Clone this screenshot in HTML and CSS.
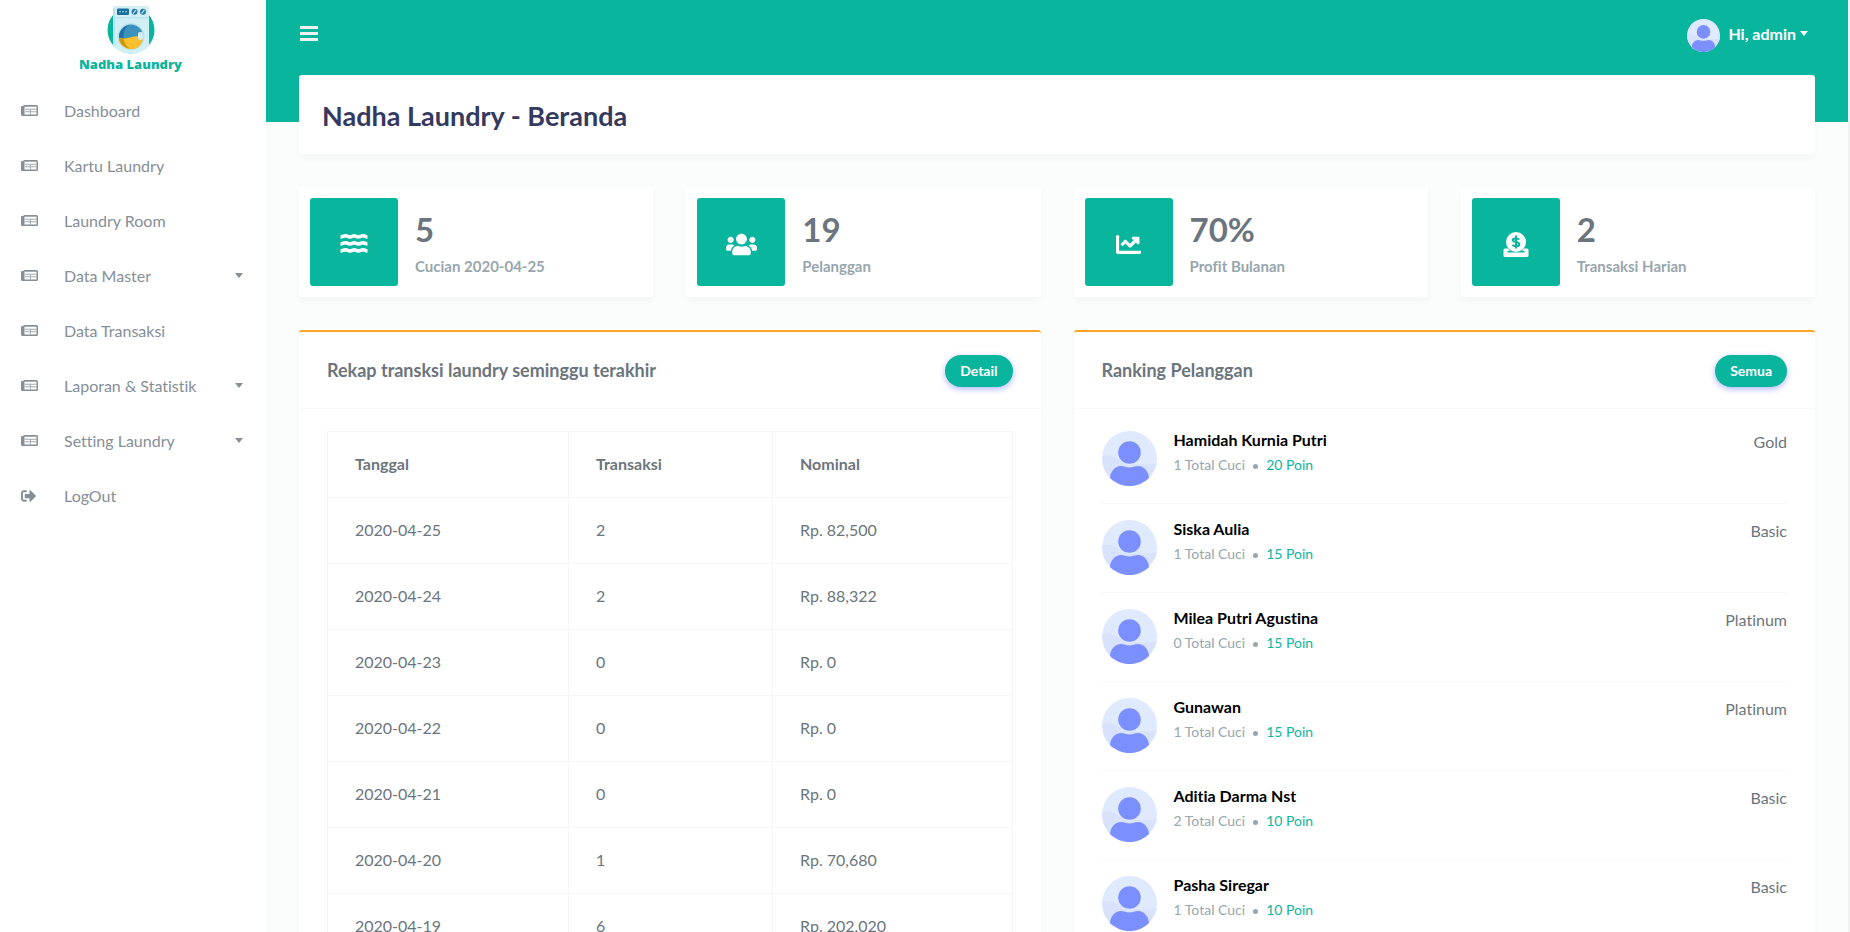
FILE: index.html
```
<!DOCTYPE html>
<html lang="id">
<head>
<meta charset="utf-8">
<title>Nadha Laundry - Beranda</title>
<link rel="stylesheet" href="styles.css">
</head>
<body>
<svg class="sprite" aria-hidden="true">
  <symbol id="news" viewBox="0 0 17 12">
    <path fill="currentColor" fill-rule="evenodd" d="M2 1.500A1.500 1.500 0 0 1 3.500 0h12A1.500 1.500 0 0 1 17 1.500v8a1.500 1.500 0 0 1-1.500 1.500h-14A1.500 1.500 0 0 1 0 9.500V2a1 1 0 0 1 1-1h1zM3.500 1.500v8h12v-8z"/>
    <path fill="currentColor" opacity=".75" d="M3.500 1.500h12v.6h-12zM4 3.800h11.500v1H4zM4 6.200h11.500v1.100H4zM8.900 4.500h1v5h-1zM1 2.500h1V9H1z"/>
  </symbol>
  <symbol id="person" viewBox="0 0 55 55">
    <circle cx="27.500" cy="27.500" r="27.500" fill="#e0eaff"/>
    <path fill="#d8e3fb" d="M0 26c6-3 11-1 17 3s24 6 38 3l-2 6-9 12H10L2 38z"/>
    <circle cx="27.500" cy="21.500" r="12.500" fill="#e0eaff"/>
    <circle cx="27.500" cy="21.500" r="11.300" fill="#7c8fff"/>
    <path fill="#7c8fff" d="M8 47c.5-7 5-12 11-12 3 0 5 1.500 8.500 1.500S33 35 36 35c6 0 10.500 5 11 12a27.500 27.500 0 0 1-39 0z"/>
  </symbol>
</svg>

<div class="app">
  <aside class="sidebar">
    <a class="brand" href="#">
      <svg class="brand-mark" viewBox="0 0 48 48" aria-hidden="true">
        <circle cx="24" cy="24" r="23.500" fill="#0ab59e"/>
        <path fill="#d3eff6" d="M6 2a2 2 0 0 1 2-2h32a2 2 0 0 1 2 2v38c-5 5-11 7.500-18 7.500S11 45 6 40z"/>
        <path fill="#b9e3ee" d="M6 11h36v1.500H6zM6 2h2v39l-2-2z"/>
        <rect x="10" y="2.500" width="12" height="6.500" rx="1" fill="#1f6f9c"/>
        <path stroke="#6fc3dc" stroke-width="1.200" stroke-dasharray="2 1" d="M12 5.700h8"/>
        <circle cx="27.500" cy="5.700" r="3" fill="#2b78a5"/><circle cx="36" cy="5.700" r="3" fill="#2b78a5"/>
        <path stroke="#a8dced" stroke-width="1.200" d="m26 7.500 3-3.500m5.500 3.500 3-3.500"/>
        <circle cx="24" cy="30.500" r="13.500" fill="#b9e3ee"/>
        <circle cx="24" cy="30.500" r="12" fill="#3c92bd"/>
        <path fill="#f8c02c" d="M12 32c8 2 12-3 24-1.500a12 12 0 0 1-24 1.500z"/>
        <path fill="#2170a0" d="M12 31.500c0-6 4-11 10-12.500-4 3-6 7-5.500 13z"/>
        <path fill="#cf9708" d="M12 32l4.500.4c.5 4 3 8 6.500 10-6-.4-10.500-4.400-11-10.400z"/>
        <rect x="31" y="26" width="5" height="8" rx="2" fill="#d3eff6"/>
      </svg>
      <span class="brand-name">Nadha Laundry</span>
    </a>
    <nav class="menu">
      <a href="#"><svg class="mi"><use href="#news"/></svg><span>Dashboard</span></a>
      <a href="#"><svg class="mi"><use href="#news"/></svg><span>Kartu Laundry</span></a>
      <a href="#"><svg class="mi"><use href="#news"/></svg><span>Laundry Room</span></a>
      <a class="sub" href="#"><svg class="mi"><use href="#news"/></svg><span>Data Master</span></a>
      <a href="#"><svg class="mi"><use href="#news"/></svg><span>Data Transaksi</span></a>
      <a class="sub" href="#"><svg class="mi"><use href="#news"/></svg><span>Laporan &amp; Statistik</span></a>
      <a class="sub" href="#"><svg class="mi"><use href="#news"/></svg><span>Setting Laundry</span></a>
      <a href="#"><svg class="mi" viewBox="32 64 576 384"><path fill="currentColor" d="M497 273L329 441c-15 15-41 4.500-41-17v-96H152c-13.300 0-24-10.700-24-24v-96c0-13.300 10.700-24 24-24h136V88c0-21.400 25.900-32 41-17l168 168c9.300 9.400 9.300 24.600 0 34zM192 436v-40c0-6.600-5.400-12-12-12H96c-17.700 0-32-14.300-32-32V160c0-17.700 14.300-32 32-32h84c6.600 0 12-5.400 12-12V76c0-6.600-5.400-12-12-12H96c-53 0-96 43-96 96v192c0 53 43 96 96 96h84c6.600 0 12-5.400 12-12z" transform="translate(32)"/></svg><span>LogOut</span></a>
    </nav>
  </aside>

  <div class="page">
    <header class="topbar">
      <button class="burger" type="button" aria-label="Menu"><svg viewBox="0 0 18 15" width="18" height="15"><path fill="#f2f2f2" d="M0 0h18v3H0zM0 6h18v3H0zM0 12h18v3H0z"/></svg></button>
      <button class="user" type="button"><svg width="33" height="33"><use href="#person"/></svg><span>Hi, admin</span></button>
    </header>
    <main class="content">
      <section class="card title"><h1>Nadha Laundry - Beranda</h1></section>

      <section class="stats">
        <article class="card stat">
          <div class="tile"><svg width="28" height="22" viewBox="0 0 28 22" fill="none" stroke="#fff" stroke-width="3.600"><path d="M.5 4c2 0 3-1.200 5-1.200s2.500 1.200 4.500 1.200 2.500-1.200 4.200-1.200 2.300 1.200 4.300 1.200 2.500-1.200 4.500-1.200 2.500 1.200 4.500 1.200M.5 11c2 0 3-1.200 5-1.200s2.500 1.200 4.500 1.200 2.500-1.200 4.200-1.200 2.300 1.200 4.300 1.200 2.500-1.200 4.500-1.200 2.500 1.200 4.500 1.200M.5 18c2 0 3-1.200 5-1.200s2.500 1.200 4.500 1.200 2.500-1.200 4.200-1.200 2.300 1.200 4.300 1.200 2.500-1.200 4.500-1.200 2.500 1.200 4.500 1.200"/></svg></div>
          <div class="figures"><strong>5</strong><h4>Cucian 2020-04-25</h4></div>
        </article>
        <article class="card stat">
          <div class="tile"><svg width="31" height="25" viewBox="0 0 640 512"><path fill="#fff" d="M96 224c35.300 0 64-28.700 64-64s-28.700-64-64-64-64 28.700-64 64 28.700 64 64 64zm448 0c35.300 0 64-28.700 64-64s-28.700-64-64-64-64 28.700-64 64 28.700 64 64 64zm32 32h-64c-17.600 0-33.500 7.100-45.100 18.600 40.300 22.100 68.900 62 75.100 109.400h66c17.700 0 32-14.300 32-32v-32c0-35.300-28.700-64-64-64zm-256 0c61.900 0 112-50.100 112-112S381.900 32 320 32 208 82.100 208 144s50.100 112 112 112zm76.800 32h-8.300c-20.800 10-43.900 16-68.500 16s-47.600-6-68.500-16h-8.300C179.600 288 128 339.600 128 403.200V432c0 26.500 21.500 48 48 48h288c26.500 0 48-21.500 48-48v-28.800c0-63.600-51.600-115.200-115.200-115.200zm-223.700-13.400C161.500 263.100 145.600 256 128 256H64c-35.300 0-64 28.700-64 64v32c0 17.700 14.300 32 32 32h65.900c6.300-47.400 34.900-87.300 75.200-109.400z"/></svg></div>
          <div class="figures"><strong>19</strong><h4>Pelanggan</h4></div>
        </article>
        <article class="card stat">
          <div class="tile"><svg width="25" height="25" viewBox="0 0 512 512"><path fill="#fff" d="M496 384H64V80c0-8.800-7.200-16-16-16H16C7.200 64 0 71.200 0 80v336c0 17.700 14.300 32 32 32h464c8.800 0 16-7.200 16-16v-32c0-8.800-7.200-16-16-16zM464 96H345.900c-21.400 0-32.100 25.900-17 41l32.400 32.400L288 242.800l-73.400-73.400c-12.500-12.500-32.800-12.500-45.300 0l-68.700 68.700c-6.200 6.200-6.200 16.400 0 22.600l22.600 22.600c6.200 6.200 16.400 6.200 22.600 0L192 237.300l73.400 73.400c12.500 12.500 32.800 12.500 45.300 0l96-96 32.400 32.400c15.100 15.100 41 4.400 41-17V112c-.100-8.800-7.300-16-16.100-16z"/></svg></div>
          <div class="figures"><strong>70%</strong><h4>Profit Bulanan</h4></div>
        </article>
        <article class="card stat">
          <div class="tile"><svg width="26" height="25" viewBox="0 0 26 25"><path fill="#fff" d="M.5 18a1.500 1.500 0 0 1 1.500-1.500h3l2 2.500h-2.500v1.500h17V19H19l2-2.500h3a1.500 1.500 0 0 1 1.500 1.500v5.500A1.500 1.500 0 0 1 24 25H2a1.500 1.500 0 0 1-1.500-1.500z"/><circle cx="13" cy="10" r="10" fill="#fff"/><path fill="none" stroke="#0ab59e" stroke-width="2" d="M16.300 7.500c-.8-1.200-6.600-1.900-6.600.5 0 2.600 6.600 1.500 6.600 4.300 0 2.600-5.700 2.200-6.800.6M13 3.500v13"/></svg></div>
          <div class="figures"><strong>2</strong><h4>Transaksi Harian</h4></div>
        </article>
      </section>

      <section class="panels">
        <article class="card panel">
          <header class="panel-head"><h2>Rekap transksi laundry seminggu terakhir</h2><a class="pill" href="#">Detail</a></header>
          <div class="panel-body">
            <table class="recap">
              <thead><tr><th class="c1">Tanggal</th><th class="c2">Transaksi</th><th>Nominal</th></tr></thead>
              <tbody>
                <tr><td>2020-04-25</td><td>2</td><td>Rp. 82,500</td></tr>
                <tr><td>2020-04-24</td><td>2</td><td>Rp. 88,322</td></tr>
                <tr><td>2020-04-23</td><td>0</td><td>Rp. 0</td></tr>
                <tr><td>2020-04-22</td><td>0</td><td>Rp. 0</td></tr>
                <tr><td>2020-04-21</td><td>0</td><td>Rp. 0</td></tr>
                <tr><td>2020-04-20</td><td>1</td><td>Rp. 70,680</td></tr>
                <tr><td>2020-04-19</td><td>6</td><td>Rp. 202,020</td></tr>
              </tbody>
            </table>
          </div>
        </article>
        <article class="card panel">
          <header class="panel-head"><h2>Ranking Pelanggan</h2><a class="pill" href="#">Semua</a></header>
          <ul class="panel-body ranking">
            <li><svg class="avatar"><use href="#person"/></svg><div class="who"><h3>Hamidah Kurnia Putri</h3><p>1 Total Cuci<i></i><a href="#">20 Poin</a></p></div><span class="level">Gold</span></li>
            <li><svg class="avatar"><use href="#person"/></svg><div class="who"><h3>Siska Aulia</h3><p>1 Total Cuci<i></i><a href="#">15 Poin</a></p></div><span class="level">Basic</span></li>
            <li><svg class="avatar"><use href="#person"/></svg><div class="who"><h3>Milea Putri Agustina</h3><p>0 Total Cuci<i></i><a href="#">15 Poin</a></p></div><span class="level">Platinum</span></li>
            <li><svg class="avatar"><use href="#person"/></svg><div class="who"><h3>Gunawan</h3><p>1 Total Cuci<i></i><a href="#">15 Poin</a></p></div><span class="level">Platinum</span></li>
            <li><svg class="avatar"><use href="#person"/></svg><div class="who"><h3>Aditia Darma Nst</h3><p>2 Total Cuci<i></i><a href="#">10 Poin</a></p></div><span class="level">Basic</span></li>
            <li><svg class="avatar"><use href="#person"/></svg><div class="who"><h3>Pasha Siregar</h3><p>1 Total Cuci<i></i><a href="#">10 Poin</a></p></div><span class="level">Basic</span></li>
          </ul>
        </article>
      </section>
    </main>
  </div>
</div>
</body>
</html>
```
FILE: styles.css
```
* { box-sizing: border-box; }
body {
  margin: 0;
  height: 100vh;
  overflow: hidden;
  background: #fbfdfc;
  color: #6c757d;
  font: 16px/24px Lato, "Open Sans", sans-serif;
  font-variant-ligatures: none;
}
h1, h2, h3, h4, p, ul { margin: 0; padding: 0; }
a { color: inherit; text-decoration: none; }
button { border: 0; background: none; padding: 0; font: inherit; cursor: pointer; }
svg { display: block; flex: none; }
.sprite { position: absolute; width: 0; height: 0; }
.card {
  background: #fff;
  border-radius: 3px;
  box-shadow: 0 4px 8px rgba(0, 0, 0, .03);
}

.app { display: flex; height: 100vh; overflow: hidden; border-right: 2px solid #eff0f0; }
.sidebar {
  flex: 0 0 266px;
  background: #fff;
  box-shadow: 0 4px 8px rgba(0, 0, 0, .03);
}
.brand { display: flex; flex-direction: column; align-items: center; padding: 6px 5px 0 0; }
.brand-mark { width: 48px; height: 48px; }
.brand-name { color: #0ab59e; font: 800 13px/20px "Open Sans", sans-serif; }
.menu { padding-top: 9px; }
.menu a { display: flex; align-items: center; height: 55px; padding: 0 23px 0 21px; color: #868e96; }
.mi { width: 17px; height: 12px; margin-right: 26px; }
.sub::after, .user::after {
  content: "";
  margin-left: auto;
  border: 4px solid transparent;
  border-top: 5px solid currentColor;
  border-bottom: 0;
}

.page {
  flex: 1;
  min-width: 0;
  padding: 0 33px;
  background: linear-gradient(#0ab59e 122px, transparent 122px);
}
.topbar { display: flex; align-items: center; justify-content: space-between; height: 75px; padding: 0 7px 8px 1px; }
.user { display: flex; align-items: center; gap: 8px; color: #fff; font-weight: 700; }
.user svg { margin-top: 3px; }
.user::after { margin-left: -4px; }

.title { padding: 21px 23px 19px; }
.title h1 { color: #34395e; font-size: 27px; line-height: 39px; }

.stats { display: grid; grid-template-columns: repeat(4, 1fr); gap: 33px; margin: 33px 0; }
.stat { display: flex; gap: 17px; padding: 11px; }
.tile {
  flex: 0 0 88px;
  height: 88px;
  padding-top: 4px;
  display: grid;
  place-items: center;
  border-radius: 3px;
  background: #0ab59e;
}
.figures { padding-top: 11px; }
.figures strong { display: block; font-size: 33px; line-height: 40px; }
.figures h4 { color: #98a6ad; font-size: 15px; line-height: 34px; }

.panels { display: grid; grid-template-columns: 1fr 1fr; gap: 33px; }
.panel { border-top: 2px solid #ffa426; }
.panel-head {
  display: flex;
  align-items: center;
  justify-content: space-between;
  height: 77px;
  padding: 0 28px;
  border-bottom: 1px solid #f9f9f9;
}
.panel-head h2 { font-size: 18px; line-height: 28px; }
.pill {
  margin-top: 2px;
  padding: 0 15px;
  border-radius: 16px;
  background: #0ab59e;
  box-shadow: 0 2px 6px #acb5f6;
  color: #fff;
  font-size: 14px;
  font-weight: 700;
  line-height: 32px;
}
.panel-body { padding: 22px 28px 28px; }

.recap { width: 100%; border-collapse: collapse; table-layout: fixed; }
.recap th, .recap td {
  height: 66px;
  padding: 0 27px 2px;
  border: 1px solid #f6f6f6;
  text-align: left;
}
.c1 { width: 241px; }
.c2 { width: 204px; }

.ranking { list-style: none; }
.ranking li { display: flex; height: 73px; margin-bottom: 16px; border-bottom: 1px solid #f9f9f9; }
.avatar { width: 55px; height: 55px; margin-right: 17px; }
.who { flex: 1; }
.who h3 { color: #000; font-size: 16px; line-height: 18px; }
.who p { display: flex; align-items: center; margin-top: 4px; color: #98a6ad; font-size: 14px; }
.who i { width: 5px; height: 5px; margin: 2px 8px 0; border-radius: 50%; background: #98a6ad; }
.who a { color: #0ab59e; }
.level { line-height: 22px; }
```
